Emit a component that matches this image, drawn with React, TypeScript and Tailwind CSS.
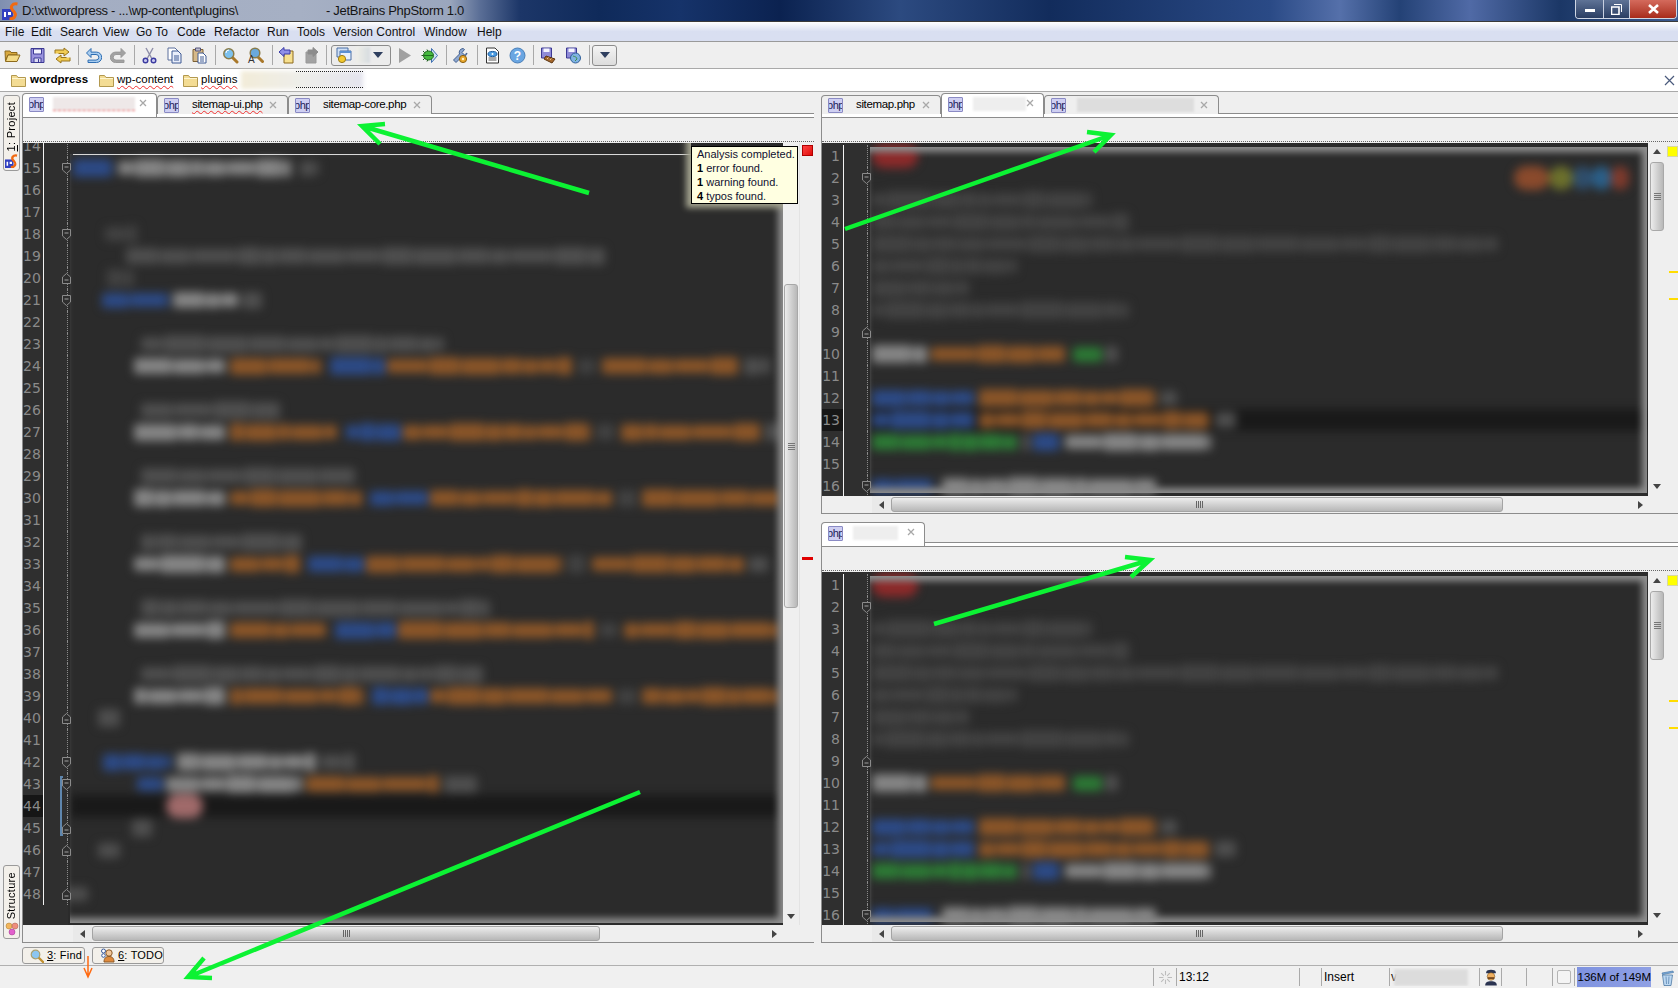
import React from "react";

type Seg = [number, number, string];
type Row = { n: number; segs?: Seg[]; fold?: "d" | "u"; active?: boolean; bracket?: "t" | "m" | "b" };

const C: Record<string, string> = {
  g: "#858585",
  o: "#8a5528",
  b: "#2c4a86",
  d: "#4e4e4e",
  f: "#424242",
  n: "#2c7a35",
  r: "#8c2a2a",
  p: "#a06a6a",
  s1: "#8a4a2c",
  s2: "#6c702c",
  s3: "#2f4e6c",
  s4: "#2b5f88",
  s5: "#7e3a2c",
};

const callLine = (o1: number, b: number, o2: number, o3: number, o3e: number): Seg[] => [
  [125, 210, "g"],
  [215, o1, "o"],
  [o1 + 8, b, "b"],
  [b + 2, o2, "o"],
  [o2 + 6, o2 + 22, "f"],
  [o2 + 28, o3, "o"],
  [o3 + 5, o3e, "d"],
];

const leftRows: Row[] = [
  { n: 14 },
  { n: 15, fold: "d", segs: [[68, 105, "b"], [110, 272, "g"], [280, 298, "d"]] },
  { n: 16 },
  { n: 17 },
  { n: 18, fold: "d", segs: [[98, 128, "f"]] },
  { n: 19, segs: [[118, 565, "d"]] },
  { n: 20, fold: "u", segs: [[100, 125, "f"]] },
  { n: 21, fold: "d", segs: [[95, 158, "b"], [162, 222, "g"], [226, 245, "d"]] },
  { n: 22 },
  { n: 23, segs: [[132, 415, "d"]] },
  { n: 24, segs: callLine(300, 360, 535, 690, 720) },
  { n: 25 },
  { n: 26, segs: [[132, 262, "d"]] },
  { n: 27, segs: callLine(315, 375, 552, 710, 735) },
  { n: 28 },
  { n: 29, segs: [[132, 332, "d"]] },
  { n: 30, segs: callLine(338, 400, 572, 730, 740) },
  { n: 31 },
  { n: 32, segs: [[132, 282, "d"]] },
  { n: 33, segs: callLine(280, 340, 525, 695, 718) },
  { n: 34 },
  { n: 35, segs: [[132, 458, "d"]] },
  { n: 36, segs: callLine(305, 370, 555, 730, 740) },
  { n: 37 },
  { n: 38, segs: [[132, 452, "d"]] },
  { n: 39, segs: callLine(340, 400, 572, 730, 740) },
  { n: 40, fold: "u", segs: [[92, 112, "d"]] },
  { n: 41 },
  { n: 42, fold: "d", segs: [[96, 160, "b"], [165, 295, "g"], [300, 332, "d"]] },
  { n: 43, fold: "d", bracket: "t", segs: [[128, 152, "b"], [155, 282, "g"], [286, 410, "o"], [415, 446, "d"]] },
  { n: 44, active: true, bracket: "m", segs: [[155, 190, "p"]] },
  { n: 45, fold: "u", bracket: "b", segs: [[123, 142, "d"]] },
  { n: 46, fold: "u", segs: [[92, 112, "d"]] },
  { n: 47 },
  { n: 48, fold: "u", segs: [[60, 82, "d"]] },
];

const rightRows = (spots: boolean): Row[] => [
  { n: 1, segs: [[815, 858, "r"]] },
  {
    n: 2,
    fold: "d",
    segs: spots
      ? [[1415, 1447, "s1"], [1447, 1470, "s2"], [1470, 1488, "s3"], [1488, 1505, "s4"], [1505, 1522, "s5"]]
      : [],
  },
  { n: 3, segs: [[815, 1020, "f"]] },
  { n: 4, segs: [[815, 1055, "f"]] },
  { n: 5, segs: [[815, 1400, "f"]] },
  { n: 6, segs: [[815, 950, "f"]] },
  { n: 7, segs: [[815, 905, "f"]] },
  { n: 8, segs: [[815, 1055, "f"]] },
  { n: 9, fold: "u" },
  { n: 10, segs: [[815, 866, "g"], [870, 995, "o"], [1003, 1030, "n"], [1033, 1045, "d"]] },
  { n: 11 },
  { n: 12, segs: [[815, 910, "b"], [915, 1080, "o"], [1085, 1100, "d"]] },
  { n: 13, active: spots, segs: [[815, 910, "b"], [915, 1130, "o"], [1135, 1155, "d"]] },
  { n: 14, segs: [[815, 950, "n"], [955, 962, "d"], [965, 990, "b"], [995, 1132, "g"]] },
  { n: 15 },
  { n: 16, fold: "d", segs: [[815, 872, "b"], [880, 1080, "g"]] },
];

/* Word-sized chunks, so the blurred code mottles the way real text does. */
function chunks(width: number, seed: number) {
  const out: { w: number; h: number }[] = [];
  let left = width;
  let s = seed;
  while (left > 0) {
    s = (s * 9301 + 49297) % 233280;
    const w = Math.min(left, 12 + (s % 34));
    s = (s * 9301 + 49297) % 233280;
    out.push({ w, h: 14 + (s % 5) });
    left -= w + 1;
  }
  return out;
}

function Fold({ dir }: { dir: "d" | "u" }) {
  return (
    <svg width="9" height="11" viewBox="0 0 9 11" className="-mr-[4px] relative z-10 shrink-0">
      {dir === "d" ? (
        <path d="M.5.5h8v6.5l-4 3.5-4-3.5z" fill="#2e2e2e" stroke="#8b8b8b" />
      ) : (
        <path d="M.5 10.5h8V4L4.5.5.5 4z" fill="#2e2e2e" stroke="#8b8b8b" />
      )}
      <path d={dir === "d" ? "M2.5 4h4" : "M2.5 7h4"} stroke="#a0a0a0" />
    </svg>
  );
}

function PhpIcon() {
  return (
    <div className="w-[15px] h-[15px] shrink-0 bg-[#cfcff2] border border-[#8a8ac4] rounded-[1px] flex items-center justify-center overflow-hidden font-['Liberation_Sans',sans-serif] text-[11px] leading-none text-[#22225a] tracking-[-0.5px]">
      php
    </div>
  );
}

function TabX({ cls }: { cls: string }) {
  return (
    <svg width="8" height="8" viewBox="0 0 8 8" className={cls}>
      <path d="M1 1l6 6M7 1L1 7" stroke="#a8a8a8" strokeWidth="1.3" />
    </svg>
  );
}

function Tab(p: { active?: boolean; w: string; textCls: string; label?: string; wavy?: boolean; xCls: string; blurCls?: string }) {
  return (
    <div
      className={
        p.active
          ? `${p.w} mt-[1px] h-[24px] bg-white border-x border-t border-[#8c8c8c] rounded-t-[4px] relative z-10 flex items-start pt-[3px] pl-[6px] shrink-0`
          : `${p.w} mt-[3px] h-[19px] bg-[#efefef] border-x border-t border-[#8c8c8c] rounded-t-[4px] flex items-center pl-[6px] shrink-0`
      }
    >
      <PhpIcon />
      {p.label ? (
        <span
          className={`${p.textCls} text-[11.5px] tracking-[-0.35px] leading-none text-black whitespace-nowrap ${
            p.wavy ? "underline decoration-wavy decoration-[#f03030] decoration-1 underline-offset-2" : ""
          }`}
        >
          {p.label}
        </span>
      ) : (
        <span className={`${p.textCls} ${p.blurCls} h-[14px] blur-[1px] shrink-0`} />
      )}
      <span className="flex-1" />
      <TabX cls={p.xCls} />
    </div>
  );
}

function VThumb({ cls }: { cls: string }) {
  return (
    <div className={`${cls} w-[14px] mx-auto rounded-[3px] border border-[#a8a8a8] bg-linear-to-r from-[#ececec] to-[#b8b8b8] flex flex-col items-center justify-center gap-[1px]`}>
      <i className="block w-[7px] h-px bg-[#777]" />
      <i className="block w-[7px] h-px bg-[#777]" />
      <i className="block w-[7px] h-px bg-[#777]" />
      <i className="block w-[7px] h-px bg-[#777]" />
    </div>
  );
}

function Tri({ dir, cls }: { dir: "u" | "d" | "l" | "r"; cls?: string }) {
  const d = { u: "M0 6L4 1l4 5z", d: "M0 2l4 5 4-5z", l: "M6 0L1 4l5 4z", r: "M2 0l5 4-5 4z" }[dir];
  return (
    <svg width="8" height="8" viewBox="0 0 8 8" className={cls}>
      <path d={d} fill="#444" />
    </svg>
  );
}

function HScroll(p: { lead: string; thumb: string; gripGap: string; tail: string }) {
  return (
    <div className="h-[17px] bg-[#efefef] flex items-center shrink-0">
      <div className={`${p.lead} w-[19px] h-[17px] bg-[#e9e9e9] flex items-center justify-center shrink-0`}>
        <Tri dir="l" />
      </div>
      <div className={`${p.thumb} h-[15px] rounded-[3px] border border-[#a4a4a4] bg-linear-to-b from-[#ededed] to-[#b7b7b7] flex items-center shrink-0`}>
        <div className={`${p.gripGap} flex gap-px`}>
          <i className="block w-px h-[7px] bg-[#666]" />
          <i className="block w-px h-[7px] bg-[#666]" />
          <i className="block w-px h-[7px] bg-[#666]" />
          <i className="block w-px h-[7px] bg-[#666]" />
        </div>
      </div>
      <Tri dir="r" cls={p.tail} />
    </div>
  );
}

function Editor(p: {
  rows: Row[];
  origin: number;
  numW: string;
  offset: string;
  overlay: string;
  scroll: React.ReactNode;
  stripe: React.ReactNode;
  children?: React.ReactNode;
}) {
  return (
    <div className="flex-1 min-h-0 flex bg-[#efefef]">
      <div className="flex-1 min-w-0 flex bg-[#2b2b2b] overflow-hidden">
        <div className={`${p.offset} shrink-0 bg-[#2f2f2f]`}>
          {p.rows.map((r) => (
            <div key={r.n} className="flex h-[22px]">
              <div
                className={`${p.numW} text-right pr-[3px] font-['DejaVu_Sans',sans-serif] text-[14px] leading-[22px] text-[#8a8a8a] ${
                  r.active ? "bg-[#161616]" : ""
                }`}
              >
                {r.n}
              </div>
              <div className="w-px bg-[#f2f2f2]" />
              <div className="w-[24px] border-r border-dotted border-[#8a8a8a] flex items-center justify-end relative">
                {r.bracket === "t" && <span className="absolute left-[16px] top-[3px] bottom-0 w-[3px] border-l-2 border-t-2 border-[#5f86ad]" />}
                {r.bracket === "m" && <span className="absolute left-[16px] top-0 bottom-0 w-[3px] border-l-2 border-[#5f86ad]" />}
                {r.bracket === "b" && <span className="absolute left-[16px] top-0 bottom-[3px] w-[3px] border-l-2 border-b-2 border-[#5f86ad]" />}
                {r.fold && <Fold dir={r.fold} />}
              </div>
            </div>
          ))}
        </div>
        <div className="flex-1 min-w-0 ml-[2px] relative overflow-hidden">
          <div className={`${p.offset} blur-[5px]`}>
            {p.rows.map((r) => (
              <div key={r.n} className={`relative flex items-center h-[22px] ${r.active ? "bg-[#191919]" : ""}`}>
                {(r.segs || []).map((s, i) => {
                  const prev = i === 0 ? p.origin : (r.segs as Seg[])[i - 1][1] * 1.0702;
                  const w = (s[1] - s[0]) * 1.0702;
                  const solid = s[2] === "r" || s[2] === "p" || s[2].startsWith("s");
                  return solid ? (
                    <span
                      key={i}
                      className="block h-[24px] shrink-0 rounded-full"
                      style={{ marginLeft: s[0] * 1.0702 - prev, width: w, background: C[s[2]] }}
                    />
                  ) : (
                    <span
                      key={i}
                      className="flex items-center gap-[1px] shrink-0 overflow-hidden h-[20px]"
                      style={{ marginLeft: s[0] * 1.0702 - prev, width: w }}
                    >
                      {chunks(w, r.n * 37 + i * 11 + 5).map((c, j) => (
                        <span
                          key={j}
                          className="block shrink-0 rounded-[3px]"
                          style={{ width: c.w, height: c.h, background: C[s[2]] }}
                        />
                      ))}
                    </span>
                  );
                })}
              </div>
            ))}
          </div>
          <div className={`absolute pointer-events-none ${p.overlay}`} />
          {p.children}
        </div>
      </div>
      {p.scroll}
      {p.stripe}
    </div>
  );
}

function I({ children }: { children: React.ReactNode }) {
  return <div className="w-[25px] h-full flex items-center justify-center shrink-0"><svg width="17" height="17" viewBox="0 0 17 17">{children}</svg></div>;
}

function Sep({ cls }: { cls: string }) {
  return <div className={`${cls} w-px h-[20px] bg-[#a9a9a9] shrink-0`} />;
}

function Toolbar() {
  return (
    <div className="h-[27px] bg-[#efefef] border-b border-[#a9a9a9] flex items-center shrink-0">
      <I>
        <path d="M1 4h5l1 1.500h6V8H4L1.500 14z" fill="#d9a93e" stroke="#8d6a1c" />
        <path d="M4 8h12l-3 6.500H1.500z" fill="#f4db86" stroke="#8d6a1c" />
      </I>
      <I>
        <path d="M2 1.500h13v14H2z" fill="#9a93de" stroke="#3d3a94" />
        <path d="M4.500 2h8v5h-8z" fill="#f4f4ff" stroke="#3d3a94" />
        <path d="M5 11h7v4.500H5z" fill="#dcdcf4" stroke="#3d3a94" />
        <path d="M9.500 12v3" stroke="#3d3a94" />
      </I>
      <I>
        <path d="M1 6.500V3h9V1l5 4-5 4V6.500H4.500" fill="#f1cc55" stroke="#99751c" />
        <path d="M16 10.500V14H7v2l-5-4 5-4v2.500h5.500" fill="#f1cc55" stroke="#99751c" />
      </I>
      <Sep cls="ml-[3px] mr-[2px]" />
      <I>
        <path d="M6 1.500L1.500 6 6 10.500V7.500h5a2.800 2.800 0 010 5.600H3v2.400h8.500a5.200 5.200 0 000-10.400H6z" fill="#a9cdf0" stroke="#2d6db2" />
      </I>
      <I>
        <path d="M11 1.500L15.500 6 11 10.500V7.500H6a2.800 2.800 0 000 5.600h8v2.400H5.500a5.200 5.200 0 010-10.400H11z" fill="#a2a2a2" stroke="#999" />
      </I>
      <Sep cls="ml-[3px] mr-[2px]" />
      <I>
        <path d="M5 1l5.500 10M12 1L6.500 11" stroke="#8e8ea8" strokeWidth="1.400" />
        <circle cx="4.500" cy="13.500" r="2.300" fill="#c9c9f0" stroke="#3b3ba0" strokeWidth="1.400" />
        <circle cx="12.500" cy="13.500" r="2.300" fill="#c9c9f0" stroke="#3b3ba0" strokeWidth="1.400" />
      </I>
      <I>
        <path d="M2 1h7l3 3v9H2z" fill="#fff" stroke="#5b6e9c" />
        <path d="M6 4h6l3 3v9H6z" fill="#e9eefa" stroke="#3f5a94" />
        <path d="M8 9h5M8 11h5M8 13h5" stroke="#3f5a94" />
      </I>
      <I>
        <path d="M2 2.500h10v12H2z" fill="#d6b98a" stroke="#7c6134" />
        <path d="M4.500 1h5v3h-5z" fill="#bdbdd0" stroke="#55557a" />
        <path d="M7 6h5l3 3v7H7z" fill="#fff" stroke="#3f5a94" />
        <path d="M9 10h4M9 12h4M9 14h4" stroke="#3f5a94" />
      </I>
      <Sep cls="ml-[3px] mr-[2px]" />
      <I>
        <path d="M10 10l5 5" stroke="#a9782a" strokeWidth="3" strokeLinecap="round" />
        <circle cx="6.800" cy="6.800" r="5" fill="#7cc1ee" stroke="#8a7c4a" strokeWidth="1.500" />
        <path d="M4 6a3 3 0 013-3" stroke="#fff" fill="none" />
      </I>
      <I>
        <path d="M11 10l4.500 4.500" stroke="#a9782a" strokeWidth="3" strokeLinecap="round" />
        <circle cx="8" cy="6" r="4.800" fill="#6aa9dc" stroke="#8a7c4a" strokeWidth="1.500" />
        <text x="1" y="16" fontSize="10" fontFamily="Liberation Sans" fill="#333">A</text>
      </I>
      <Sep cls="ml-[4px] mr-[1px]" />
      <I>
        <path d="M6 4h9v12H6z" fill="#f7e08f" stroke="#8d6a1c" />
        <path d="M1 5l5-4.500V3h6v4H6v2.500z" fill="#8f8fe8" stroke="#3a3aa8" />
      </I>
      <I>
        <path d="M3 5h10v11H3z" fill="#a2a2a2" stroke="#999" />
        <path d="M15 5l-5-4.500V3H5v4h5v2.500z" fill="#8c8c8c" stroke="#8c8c8c" />
      </I>
      <Sep cls="ml-[2px] mr-[4px]" />
      <div className="w-[60px] h-[21px] shrink-0 rounded-[3px] border border-[#8c8c8c] bg-[#ececec] flex items-center pl-[4px]">
        <svg width="17" height="17" viewBox="0 0 17 17" className="shrink-0">
          <path d="M1 1h11v9H1z" fill="#cfe0f6" stroke="#4a6fa5" />
          <path d="M4 4h11v9H4z" fill="#e8f0fb" stroke="#4a6fa5" />
          <path d="M4 4h11v2H4z" fill="#5b8fd0" />
          <circle cx="6" cy="12" r="3.600" fill="#f2c92e" stroke="#9c7b14" />
        </svg>
        <span className="w-[14px] h-[16px] ml-[3px] bg-linear-to-r from-[#f0efe8] to-[#d6dce0] blur-[1px] shrink-0" />
        <span className="flex-1" />
        <svg width="10" height="6" viewBox="0 0 10 6" className="mr-[7px] shrink-0"><path d="M0 0h10L5 6z" fill="#2f3f5f" /></svg>
      </div>
      <div className="ml-[1px]" />
      <div className="w-[25px] h-full flex items-center justify-center shrink-0">
        <svg width="14" height="17" viewBox="0 0 14 17"><path d="M1 1l12 7.500L1 16z" fill="#a0a0a0" /></svg>
      </div>
      <I>
        <path d="M10.500 1.500l6 7-6 7z" fill="#cfe2f6" stroke="#3f6fb0" />
        <path d="M2 4l2 2M2 13l2-2M0.500 8.500H3M6 2.500l1 2M6 14.500l1-2" stroke="#1f5a1f" />
        <ellipse cx="7.500" cy="8.500" rx="5" ry="4.500" fill="#46b83f" stroke="#1f6b1f" />
        <path d="M3 8.500h9" stroke="#1f6b1f" />
      </I>
      <Sep cls="ml-[4px] mr-[1px]" />
      <I>
        <path d="M11 1.500a4 4 0 00-3.500 5.500L1.500 13l2.500 2.500 6-6A4 4 0 0015 6l-2.500 2-2.500-2.500 2.500-3a4 4 0 00-1.500-1z" fill="#8fa8d0" stroke="#43608f" />
        <circle cx="11" cy="12" r="3.600" fill="#e8a72c" stroke="#8a5f10" />
        <circle cx="11" cy="12" r="1.200" fill="#fff2c4" />
      </I>
      <Sep cls="ml-[4px] mr-[2px]" />
      <I>
        <path d="M2.500 1h8.500l3.500 3.500V16h-12z" fill="#fff" stroke="#333" />
        <ellipse cx="8.500" cy="7" rx="4.500" ry="2.600" fill="#4a9ae0" stroke="#1f5e9f" />
        <circle cx="8.500" cy="7" r="1" fill="#fff" />
        <path d="M4.500 11h8M4.500 13h8" stroke="#555" />
      </I>
      <I>
        <circle cx="8.500" cy="8.500" r="7.500" fill="#6aa6e2" stroke="#4a7fb8" />
        <text x="8.500" y="13" textAnchor="middle" fontSize="12" fontWeight="bold" fontFamily="Liberation Sans" fill="#fff">?</text>
      </I>
      <Sep cls="ml-[3px] mr-[2px]" />
      <I>
        <path d="M1.500 1h10v10h-10z" fill="#8f8bd8" stroke="#3d3a94" />
        <path d="M3.500 1.500h6v3.500h-6z" fill="#f4f4ff" />
        <path d="M6 9l9 3-3 4-8-4z" fill="#a5682c" stroke="#5c3410" />
        <path d="M7 12l1.500-1.500M10 13l1.500-1.500" stroke="#e8c68c" />
      </I>
      <I>
        <path d="M1.500 1h10v10h-10z" fill="#8f8bd8" stroke="#3d3a94" />
        <path d="M3.500 1.500h6v3.500h-6z" fill="#f4f4ff" />
        <circle cx="10.500" cy="11" r="5" fill="#7fb2e2" stroke="#2f5f9a" />
        <path d="M8 9c2 1 3 0 4 3l-2 2" stroke="#3f8f4a" fill="none" />
      </I>
      <Sep cls="ml-[3px] mr-[2px]" />
      <div className="w-[25px] h-[21px] shrink-0 rounded-[3px] border border-[#8c8c8c] bg-linear-to-b from-[#f4f4f4] to-[#dcdcdc] flex items-center justify-center">
        <svg width="10" height="6" viewBox="0 0 10 6"><path d="M0 0h10L5 6z" fill="#2f3f5f" /></svg>
      </div>
    </div>
  );
}

function Folder() {
  return (
    <svg width="15" height="13" viewBox="0 0 15 13" className="shrink-0">
      <path d="M.5 1.500h5l1.500 2h7.500v9H.5z" fill="#f3dc94" stroke="#b3994f" />
      <path d="M1 4.500h13" stroke="#fff5cf" />
    </svg>
  );
}

function SideBtn({ cls, label, u, icon }: { cls: string; label: string; u?: string; icon: React.ReactNode }) {
  return (
    <div className={`${cls} ml-[3px] w-[17px] rounded-[3px] border border-[#9a9a9a] bg-[#f3f0ea] flex flex-col items-center justify-end pb-[2px] gap-[3px]`}>
      <span className="[writing-mode:vertical-rl] rotate-180 text-[11px] leading-[15px] tracking-[0.3px] text-black whitespace-nowrap">
        {u && <span className="underline">{u}</span>}
        {label}
      </span>
      {icon}
    </div>
  );
}

const menus: [string, string][] = [
  ["File", "w-[26px]"],
  ["Edit", "w-[29px]"],
  ["Search", "w-[43px]"],
  ["View", "w-[33px]"],
  ["Go To", "w-[41px]"],
  ["Code", "w-[37px]"],
  ["Refactor", "w-[53px]"],
  ["Run", "w-[30px]"],
  ["Tools", "w-[36px]"],
  ["Version Control", "w-[91px]"],
  ["Window", "w-[53px]"],
  ["Help", "w-[30px]"],
];

const Logo = ({ size }: { size: number }) => (
  <svg width={size} height={size} viewBox="0 0 18 18" className="shrink-0">
    <path d="M0 7h11v11H0z" fill="#3140c0" />
    <path d="M2 10h2v5H2zM6 10h3v3H6z" fill="#fff" />
    <path d="M15.500 2C10 1 8 5 10.500 8c2.500 3 4 4 2 7-1.500 2-5 2-5 2" fill="none" stroke="#f06a12" strokeWidth="3" />
  </svg>
);

function RightPane(p: { spots: boolean; tabs: React.ReactNode }) {
  return (
    <div className="h-[422px] shrink-0 flex flex-col">
      <div className="h-[22px] shrink-0 flex border-b border-[#8c8c8c]">{p.tabs}</div>
      <div className="flex-1 min-h-0 flex flex-col border-l border-b border-[#8c8c8c]">
        <div className="h-[3px] bg-white shrink-0" />
        <div className="h-px bg-[#8c8c8c] shrink-0" />
        <div className="h-[23px] shrink-0" />
        <div className="h-[2px] shrink-0 border-t border-dotted border-[#666]" />
        <Editor
          rows={rightRows(p.spots)}
          origin={870}
          numW="w-[21px]"
          offset="pt-[2px]"
          overlay="left-0 right-[1px] top-[4px] bottom-[3px] shadow-[inset_-9px_0_7px_-4px_#8f8f8f,inset_0_-9px_7px_-4px_#8f8f8f,inset_0_9px_7px_-4px_#8f8f8f]"
          scroll={
            <div className="w-[18px] shrink-0 flex flex-col items-center pt-[5px]">
              <Tri dir="u" />
              <VThumb cls="mt-[6px] h-[69px]" />
              <Tri dir="d" cls="mt-auto mb-[6px]" />
            </div>
          }
          stripe={
            <div className="w-[12px] shrink-0 pl-px pt-[3px]">
              <div className="w-[11px] h-[11px] bg-[#ffff00] border border-[#d8d8a0]" />
              <div className="mt-[114px] ml-[2px] w-[9px] h-[2px] bg-[#ffdc00]" />
              <div className="mt-[25px] ml-[2px] w-[9px] h-[2px] bg-[#ffdc00]" />
            </div>
          }
        />
        <HScroll lead="ml-[50px]" thumb="w-[612px]" gripGap="ml-[304px]" tail="ml-[133px]" />
      </div>
    </div>
  );
}

export default function App() {
  return (
    <div className="relative w-[1678px] h-[988px] overflow-hidden flex flex-col bg-[#efefef] font-['Liberation_Sans',sans-serif] text-[12px] text-black">
      {/* title bar */}
      <div className="h-[22px] shrink-0 flex items-center border-b border-[#3a3a3a] bg-[#0d2550] bg-[linear-gradient(90deg,#7f8fb0_0,#a3adc2_60px,#a6b0c4_300px,#9aa6bd_450px,#5a6e96_480px,#1c3668_520px,#0f2a5a_600px,#16336a_680px,#0b2250_780px,#2c4a80_900px,#122c5c_1050px,#2a4a86_1270px,#5570aa_1340px,#244276_1400px,#506aa6_1470px,#1b3766_1560px,#3b5a90_1678px)] pl-[2px]">
        <Logo size={18} />
        <span className="ml-[2px] text-[13px] tracking-[-0.3px] text-[#141414] whitespace-nowrap">D:\xt\wordpress - ...\wp-content\plugins\</span>
        <span className="w-[88px] shrink-0" />
        <span className="text-[13px] tracking-[-0.3px] text-[#141414] whitespace-nowrap">- JetBrains PhpStorm 1.0</span>
        <div className="ml-auto mr-[1px] h-[19px] self-start flex border border-t-0 border-[#cfd6e4] rounded-b-[4px] overflow-hidden">
          <div className="w-[28px] bg-linear-to-b from-[#5f7396] to-[#2b3e63] flex items-center justify-center border-r border-[#c7cfe0]">
            <span className="block w-[10px] h-[3px] bg-white mt-[2px]" />
          </div>
          <div className="w-[26px] bg-linear-to-b from-[#5f7396] to-[#2b3e63] flex items-center justify-center border-r border-[#c7cfe0]">
            <svg width="11" height="11" viewBox="0 0 11 11"><path d="M3 .5h7.500V8" fill="none" stroke="#fff" /><path d="M.5 3h7.500v7.500H.5z" fill="none" stroke="#fff" strokeWidth="1.600" /></svg>
          </div>
          <div className="w-[46px] bg-linear-to-b from-[#d46a5c] to-[#a82a1a] flex items-center justify-center">
            <svg width="11" height="10" viewBox="0 0 11 10"><path d="M1 1l9 8M10 1L1 9" stroke="#fff" strokeWidth="2.600" /></svg>
          </div>
        </div>
      </div>

      {/* menu */}
      <div className="h-[20px] shrink-0 flex items-center pl-[5px] border-b border-[#9a9a9a] bg-linear-to-b from-[#ffffff] via-[#d9dff1] to-[#d9dff1] text-[12px] text-[#111]">
        {menus.map(([m, w]) => (
          <span key={m} className={`${w} shrink-0 whitespace-nowrap`}>{m}</span>
        ))}
      </div>

      <Toolbar />

      {/* navigation bar */}
      <div className="h-[23px] shrink-0 bg-white border-b border-[#a9a9a9] flex items-center pl-[11px] text-[12px]">
        <Folder />
        <span className="ml-[4px] w-[69px] font-bold text-[11.5px] shrink-0">wordpress</span>
        <Folder />
        <span className="ml-[3px] w-[66px] text-[11.5px] shrink-0"><span className="underline decoration-wavy decoration-[#f03030] decoration-1 underline-offset-2">wp-content</span></span>
        <Folder />
        <span className="ml-[3px] w-[40px] text-[11.5px] shrink-0"><span className="underline decoration-wavy decoration-[#f03030] decoration-1 underline-offset-2">plugins</span></span>
        <div className="relative w-[122px] h-[18px] shrink-0">
          <div className="absolute inset-0 blur-[2px] bg-linear-to-r from-[#f2ecd8] via-[#eeeeea] to-[#e4e4ee]" />
          <div className="absolute right-0 top-0 w-[67px] h-[17px] border-y border-dotted border-[#222]" />
        </div>
        <svg width="11" height="11" viewBox="0 0 11 11" className="ml-auto mr-[3px]"><path d="M1 1l9 9M10 1l-9 9" stroke="#4a5a7c" strokeWidth="1.200" /></svg>
      </div>

      {/* main */}
      <div className="h-[851px] shrink-0 flex">
        <div className="w-[22px] shrink-0 flex flex-col justify-between pt-[3px] pb-[4px]">
          <SideBtn cls="h-[76px]" u="1" label=": Project" icon={<Logo size={14} />} />
          <SideBtn
            cls="h-[74px]"
            label="Structure"
            icon={
              <svg width="14" height="14" viewBox="0 0 14 14">
                <circle cx="4" cy="4" r="3" fill="#f2b55c" stroke="#a87a2a" strokeWidth=".5" />
                <circle cx="10" cy="4" r="3" fill="#ee8e7c" stroke="#a85a4a" strokeWidth=".5" />
                <circle cx="7" cy="10" r="3" fill="#e260cc" stroke="#9a2f88" strokeWidth=".5" />
              </svg>
            }
          />
        </div>

        {/* left pane */}
        <div className="w-[792px] shrink-0 flex flex-col">
          <div className="h-[22px] shrink-0 flex border-b border-[#8c8c8c] pl-0">
            <Tab active w="w-[135px]" textCls="ml-[9px]" blurCls="w-[82px] bg-[#eee8e8] border-b border-dashed border-[#ee6666]" xCls="mr-[9px] mt-[2px]" />
            <Tab w="w-[131px]" textCls="ml-[13px]" label="sitemap-ui.php" wavy xCls="mr-[10px]" />
            <Tab w="w-[144px]" textCls="ml-[13px]" label="sitemap-core.php" xCls="mr-[10px]" />
          </div>
          <div className="flex-1 min-h-0 flex flex-col border-l border-b border-[#8c8c8c]">
            <div className="h-[3px] bg-white shrink-0" />
            <div className="h-px bg-[#8c8c8c] shrink-0" />
            <div className="h-[23px] shrink-0" />
            <div className="h-[2px] shrink-0 border-t border-dotted border-[#666]" />
            <Editor
              rows={leftRows}
              origin={70}
              numW="w-[20px]"
              offset="-mt-[8px]"
              overlay="inset-x-0 top-[11px] bottom-[2px] shadow-[inset_-9px_0_7px_-4px_#8f8f8f,inset_0_-9px_7px_-4px_#8f8f8f]"
              scroll={
                <div className="w-[16px] shrink-0 flex flex-col items-center">
                  <VThumb cls="mt-[141px] h-[324px]" />
                  <Tri dir="d" cls="mt-auto mb-[5px]" />
                </div>
              }
              stripe={
                <div className="w-[15px] shrink-0 pl-[2px] pt-[2px] border-l border-[#e3e3e3]">
                  <div className="w-[11px] h-[11px] bg-linear-to-br from-[#ff4040] to-[#e00000] border border-[#b00000]" />
                  <div className="mt-[401px] w-[11px] h-[3px] bg-[#e00000]" />
                </div>
              }
            >
              <div className="absolute left-[3px] top-[11px] w-[618px] h-px bg-[#d8d8d8]" />
              <div className="absolute left-[621px] top-[-10px] w-[110px] h-[70px] shadow-[0_0_6px_5px_#a2a28e]" />
            </Editor>
            <HScroll lead="ml-[50px]" thumb="w-[508px]" gripGap="ml-[250px]" tail="ml-[170px]" />
          </div>
        </div>

        <div className="w-[7px] shrink-0" />

        {/* right column */}
        <div className="w-[857px] shrink-0 flex flex-col gap-[7px]">
          <RightPane
            spots
            tabs={
              <>
                <Tab w="w-[120px]" textCls="ml-[13px]" label="sitemap.php" xCls="mr-[10px]" />
                <Tab active w="w-[103px]" textCls="ml-[10px]" blurCls="w-[53px] bg-[#eeeeee]" xCls="mr-[9px] mt-[2px]" />
                <Tab w="w-[175px]" textCls="ml-[11px]" blurCls="w-[117px] bg-[#dddddd]" xCls="mr-[10px]" />
              </>
            }
          />
          <RightPane
            spots={false}
            tabs={<Tab active w="w-[104px]" textCls="ml-[10px]" blurCls="w-[45px] bg-[#eeeeee]" xCls="mr-[9px] mt-[2px]" />}
          />
        </div>
      </div>

      {/* tool window buttons */}
      <div className="h-[23px] shrink-0 flex items-start pt-[4px] pl-[22px] gap-[7px] border-b border-[#b0b0b0] text-[11px] tracking-[0.2px]">
        <div className="w-[63px] h-[17px] rounded-[3px] border border-[#9a9a9a] bg-[#f3f0ea] flex items-center pl-[7px] gap-[3px]">
          <svg width="14" height="14" viewBox="0 0 14 14" className="shrink-0">
            <path d="M8.500 8.500L13 13" stroke="#c09030" strokeWidth="2.400" strokeLinecap="round" />
            <circle cx="5.500" cy="5.500" r="4.300" fill="#8cc6f0" stroke="#a8a070" strokeWidth="1.200" />
          </svg>
          <span className="whitespace-nowrap"><span className="underline">3</span>: Find</span>
        </div>
        <div className="w-[72px] h-[17px] rounded-[3px] border border-[#9a9a9a] bg-[#f3f0ea] flex items-center pl-[7px] gap-[3px]">
          <svg width="15" height="15" viewBox="0 0 15 15" className="shrink-0">
            <circle cx="9" cy="5" r="3.200" fill="#f2c79a" stroke="#8a5a2a" />
            <path d="M4 14c0-4 2-5.500 5-5.500s5 1.500 5 5.500z" fill="#e08a3c" stroke="#8a5a2a" />
            <circle cx="3.500" cy="3" r="2" fill="#fff" stroke="#3a5a9a" />
            <circle cx="3.500" cy="7.500" r="1.800" fill="#fff" stroke="#3a5a9a" />
          </svg>
          <span className="whitespace-nowrap"><span className="underline">6</span>: TODO</span>
        </div>
      </div>

      {/* status bar */}
      <div className="h-[22px] shrink-0 bg-[#f0f0f0] pl-[1153px] flex items-center text-[12px]">
        <div className="w-[23px] h-[18px] border-l border-[#aaa] flex items-center justify-center shrink-0">
          <svg width="13" height="13" viewBox="0 0 12 12"><path d="M6 0v4M6 8v4M0 6h4M8 6h4M2 2l2.500 2.500M7.500 7.500L10 10M10 2L7.500 4.500M4.500 7.500L2 10" stroke="#bdbdbd" /></svg>
        </div>
        <div className="w-[123px] h-[18px] border-l border-[#aaa] pl-[2px] leading-[18px] shrink-0">13:12</div>
        <div className="w-[22px] h-[18px] border-l border-[#aaa] shrink-0" />
        <div className="w-[68px] h-[18px] border-l border-[#aaa] pl-[2px] leading-[18px] shrink-0">Insert</div>
        <div className="w-[90px] h-[18px] border-l border-[#aaa] pl-[1px] flex items-center shrink-0 overflow-hidden">
          <span className="text-[12px] shrink-0">v</span>
          <span className="w-[74px] h-[17px] -ml-[3px] bg-[#dcdcdc] blur-[1.5px] shrink-0" />
        </div>
        <div className="w-[22px] h-[18px] border-l border-[#aaa] flex items-center justify-center shrink-0">
          <svg width="14" height="18" viewBox="0 0 13 17">
            <path d="M2 4c0-3 9-3 9 0v1H2z" fill="#2a3350" />
            <circle cx="6.500" cy="8" r="3.600" fill="#f0b060" stroke="#6a4a1a" strokeWidth=".5" />
            <path d="M3.500 9.500h6" stroke="#5a3010" strokeWidth="1.400" />
            <path d="M1 16.500c0-3 2-4 5.500-4s5.500 1 5.500 4z" fill="#2a3350" />
          </svg>
        </div>
        <div className="w-[25px] h-[18px] border-l border-[#aaa] shrink-0" />
        <div className="w-[26px] h-[18px] border-l border-[#aaa] shrink-0" />
        <div className="w-[22px] h-[18px] border-l border-[#aaa] flex items-center justify-center shrink-0">
          <span className="block w-[14px] h-[14px] border border-[#b5b5b5] rounded-[2px] bg-[#f4f4f4]" />
        </div>
        <div className="w-[3px] h-[18px] border-l border-[#aaa] shrink-0" />
        <div className="w-[74px] h-[20px] bg-linear-to-r from-[#7f93e0] to-[#8fa0e4] leading-[20px] text-right text-[11.5px] whitespace-nowrap shrink-0">136M of 149M</div>
        <svg width="14" height="17" viewBox="0 0 14 17" className="ml-[9px] shrink-0">
          <path d="M2 4l11-2 .5 1.500-11 2z" fill="#7fb0e0" stroke="#3a6a9a" strokeWidth=".6" />
          <path d="M2.500 6h10L11 16.500H4z" fill="#bcd8f2" stroke="#3a6a9a" strokeWidth=".7" />
          <path d="M6 7.500l.5 7.500M9 7.500L8.500 15" stroke="#3a6a9a" strokeWidth=".6" />
        </svg>
      </div>

      {/* error tooltip */}
      <div className="absolute left-[691px] top-[146px] w-[107px] h-[58px] bg-[#ffffe1] border border-black pl-[5px] text-[11px] leading-[14px] text-[#101030] whitespace-nowrap">
        <div>Analysis completed.</div>
        <div><b className="text-black">1</b> error found.</div>
        <div><b className="text-black">1</b> warning found.</div>
        <div><b className="text-black">4</b> typos found.</div>
      </div>

      {/* annotation arrows */}
      <svg className="absolute inset-0 pointer-events-none" width="1678" height="988" viewBox="0 0 1678 988" fill="none">
        <g stroke="#0cf233" strokeWidth="4.500">
          <path d="M589 193L362 126M385 124L362 126L380 144" />
          <path d="M845 229L1111 135M1087 132L1111 135L1094 152" />
          <path d="M934 624L1150 560M1125 557L1150 560L1131 577" />
          <path d="M640 792L188 977M204 958L188 977L212 978" />
        </g>
        <path d="M88 956V976M84 968L88 977L92 968" stroke="#ff6a10" strokeWidth="1.500" />
      </svg>
    </div>
  );
}
